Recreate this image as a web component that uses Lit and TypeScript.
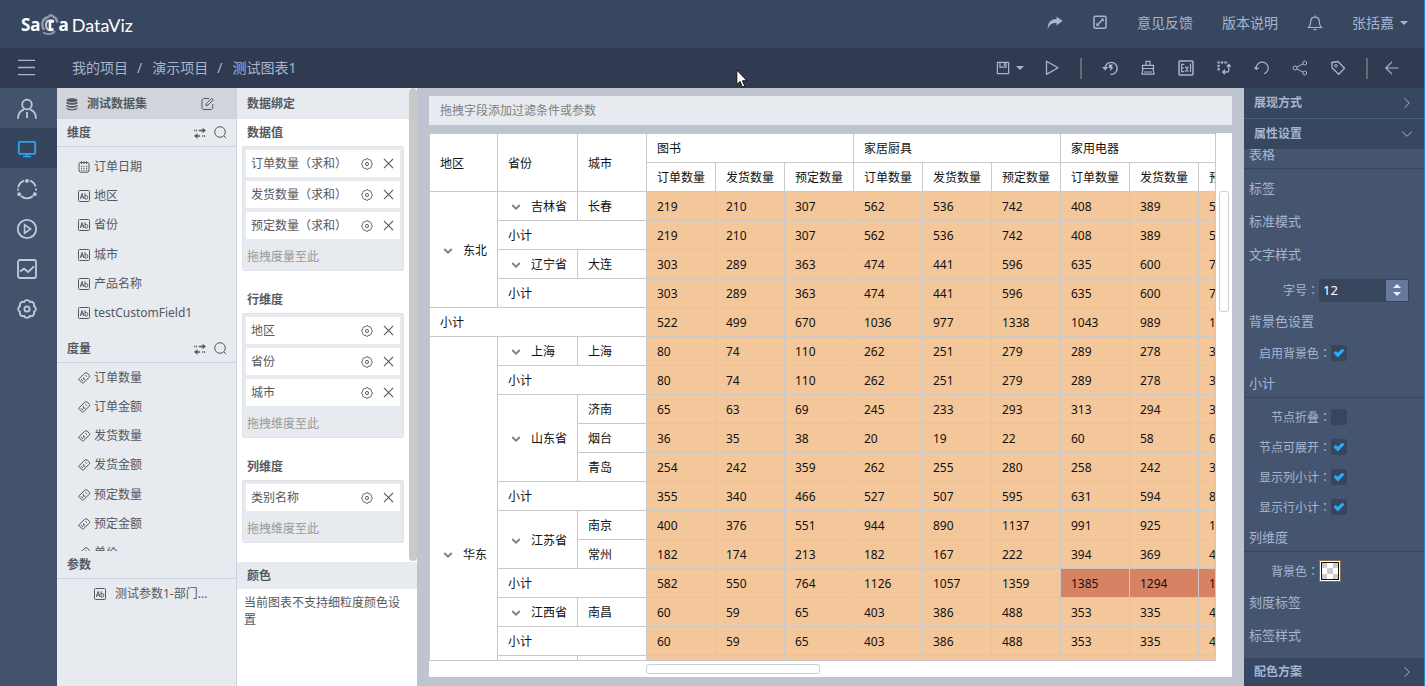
import { LitElement, html, svg, css, nothing, TemplateResult } from "lit";
import { customElement, state } from "lit/decorators.js";
import { classMap } from "lit/directives/class-map.js";

const glyphs: Record<string, TemplateResult> = {
  menu: svg`<path d="M0 1.500h18M0 9h18M0 16.500h18" stroke-width="1.400"/>`,
  user: svg`<circle cx="10" cy="5.500" r="4.800"/><path d="M1 19.800c0-5.200 2.400-8.200 6-9.200M19 19.800c0-5.200-2.400-8.200-6-9.200M10 13v6"/>`,
  monitor: svg`<rect x="1.800" y="2.800" width="16.400" height="12" rx="1"/><path d="M6 17.400h8M10 15v2" stroke-width="1.500"/>`,
  nodes: svg`<path d="M12.800 1.600a9 9 0 0 1 5.800 6M16 17a9 9 0 0 1-12 0M1.300 8.200a9 9 0 0 1 5.900-6.600M1 9.500v2M19 9.500v2"/><g fill="currentColor" stroke="none"><circle cx="10" cy="1.900" r="1.900"/><circle cx="2.200" cy="15.200" r="1.900"/><circle cx="17.800" cy="15.200" r="1.900"/></g>`,
  play: svg`<circle cx="10" cy="10" r="9.200"/><path d="M7.600 5.800v8.400l6-4.200z" stroke-width="1.600"/>`,
  trend: svg`<rect x="1" y="1" width="18" height="18" rx="2"/><path d="M3 12.500l4-2.800 4.200 3.300 5.800-5.600"/>`,
  settings: svg`<path d="M17 12.900A3.200 3.200 0 0 1 12.900 17 3.200 3.200 0 0 1 7.100 17 3.200 3.200 0 0 1 3 12.900 3.200 3.200 0 0 1 3 7.100 3.200 3.200 0 0 1 7.100 3 3.200 3.200 0 0 1 12.900 3 3.200 3.200 0 0 1 17 7.100 3.200 3.200 0 0 1 17 12.900z"/><circle cx="10" cy="10" r="2.600"/>`,
  share: svg`<path d="M9.500 1.500L15.600 6 9.500 10.500V8C5 7.800 2.800 9.300.8 14 .4 8 3.500 4.300 9.500 4z" fill="currentColor" stroke="none"/>`,
  expand: svg`<rect x="2" y="1.200" width="12" height="12" rx="1.500" stroke-width="1.500"/><path d="M5.300 10l5.500-5.500" stroke-width="1.500"/><path d="M8.600 3.500h3.200v3.200zM4.300 7.800V11h3.200z" fill="currentColor" stroke="none"/>`,
  bell: svg`<path d="M1.500 12.500h13c-1.700-1.500-2.200-3-2.200-6 0-2.800-1.500-4.400-4.300-4.400S3.700 3.700 3.700 6.500c0 3-.5 4.500-2.200 6zM6.500 14.700h3M8 .6v1.500" stroke-width="1.200"/>`,
  save: svg`<path d="M1.600 1.600h12.800v12.800H1.600z" stroke-width="1.400"/><path d="M4.500 1.600v5.500h7V1.600" stroke-width="1.400"/><path d="M9.600 2v3.400" stroke-width="1.500"/>`,
  run: svg`<path d="M2.500 1.200v13.200L14 7.800z" stroke-width="1.300" stroke-linejoin="round"/>`,
  history: svg`<path d="M3.200 8.500A6 6 0 1 1 8.500 14.300" stroke-width="1.400"/><path d="M0 7h6.200L3.200 10.500z" fill="currentColor" stroke="none"/><path d="M7 4.500h4L9.500 7h2L8 11.500 8.500 8H6.500z" fill="currentColor" stroke="none"/>`,
  brush: svg`<path d="M6 5V1.300h4V5M2.500 5.300h11v3.200h-11zM3 8.500L2 14.200h12L13 8.500M4 12h8" stroke-width="1.200"/>`,
  excel: svg`<rect x="1" y="1" width="14" height="14" rx="1" stroke-width="1.500"/><path d="M6.300 4.300H3.600v7.400h2.700M3.600 8h2.500M7.500 6.500l2.700 5.200M10.200 6.500l-2.700 5.200M12.500 3.500v8.500" stroke-width="1.200"/>`,
  exchange: svg`<path d="M1.500 2.500h10.500" stroke-width="2.200" stroke-dasharray="2.400 1"/><path d="M2.600 4.800v5.600" stroke-width="2.200" stroke-dasharray="2.300 1"/><path d="M12.800 5v5.500c0 1-.5 1.500-1.500 1.500H7M10.800 6.700l2-2.200 2 2.200M9 9.800L6.800 12 9 14.200" stroke-width="1.300"/>`,
  undo: svg`<path d="M2.300 9A6 6 0 1 1 10 13.800" stroke-width="1.200"/><path d="M.5 6.800L2.200 9.400 4.800 7.800" stroke-width="1.200"/>`,
  branch: svg`<circle cx="3" cy="8" r="2"/><circle cx="12.800" cy="3" r="1.900"/><circle cx="12.800" cy="13" r="1.900"/><path d="M4.800 7.100l6.200-3.200M4.800 8.900l6.200 3.200"/>`,
  tag: svg`<path d="M1.700 2.500l6.300-1 6.500 6.800-5.800 6L2.200 8z" stroke-width="1.300" stroke-linejoin="round"/><circle cx="6" cy="5.800" r="1.300"/>`,
  back: svg`<path d="M14.500 8H2M8 1.800L1.800 8 8 14.200" stroke-width="1.200"/>`,
  database: svg`<g fill="currentColor" stroke="none"><ellipse cx="6" cy="2.200" rx="5.500" ry="2"/><path d="M.5 3.600c2 1.800 9 1.800 11 0v1.900c-2 1.800-9 1.800-11 0zM.5 6.700c2 1.800 9 1.800 11 0v1.900c-2 1.800-9 1.800-11 0zM.5 9.800c2 1.800 9 1.800 11 0v1.200c-2 1.700-9 1.700-11 0z"/></g>`,
  edit: svg`<path d="M8 1.500H2.500L1 3v8.500L2 12.500h8.500l1.300-1.300V7M5 8.500l.4-2 5.200-5.200 1.700 1.500-5.400 5.300z"/>`,
  swap: svg`<path d="M5 3.500h5M2 9h4" stroke-width="1.600"/><path d="M0 3.500h4M8 9h4" stroke-width="1.500" stroke-dasharray="1.200 .8"/><path d="M8.500 .8L12 3.500 8.500 6.200zM3.500 6.300L0 9l3.500 2.700z" fill="currentColor" stroke="none"/>`,
  search: svg`<circle cx="6" cy="6" r="5.300"/><path d="M9.800 9.800l2.400 2.400"/>`,
  calendar: svg`<path d="M1 2.500v7.500l1 1.200h8l1-1.200V2.500l-1-.9H2zM3.500 .3V3M6 .3V3M8.500 .3V3"/><path d="M3 5.300h6.500M3 7.300h6.500M3 9.300h6.500" stroke-dasharray="1.300 1.200"/>`,
  text: svg`<rect x=".5" y=".5" width="11" height="11" rx="1"/><path d="M2.300 9l1.800-5.500L5.800 9M2.900 7h2.300M7 3.200V9M7 6c.6-.8 2.800-1 2.800 1.300S7.600 9.500 7 8.500"/>`,
  measure: svg`<path d="M.4 7.400L7.200 .8l2 .2 2.400 2.600-.1 1.400-6.600 6.300z" stroke-linejoin="round"/><path d="M3 7l1.200 1.500h.9M5.600 5.200v2h1.600M7.500 3.200l1.200 1.500"/>`,
  close: svg`<path d="M1 1l10 10M11 1L1 11" stroke-width="1.200"/>`,
  right: svg`<path d="M3.500 1.200L8.300 6l-4.800 4.800"/>`,
  down: svg`<path d="M1.200 3.500L6 8.300l4.800-4.800"/>`,
  toggle: svg`<path d="M1.200 3l3.800 3.600L8.800 3" stroke-width="1.900"/>`,
};

const icon = (name: string, size: number, box = size, weight = 1) => html`<svg
  class="icon" width=${size} height=${size} viewBox="0 0 ${box} ${box}" fill="none"
  stroke="currentColor" stroke-width=${weight} aria-hidden="true">${glyphs[name]}</svg>`;

const wide = (s: string) => html`<span class="wide">${s}</span>`;

interface Head { t: string; rows?: number; cols?: number; tree?: boolean }
interface Row { heads: Head[]; values: (number | string)[]; hot?: number }

const sub = (cols: number): Head => ({ t: "小计", cols });
const blank = ["", "", "", "", "", "", "", "", ""];
const rows: Row[] = [
  { heads: [{ t: "东北", rows: 4, tree: true }, { t: "吉林省", tree: true }, { t: "长春" }], values: [219, 210, 307, 562, 536, 742, 408, 389, 541] },
  { heads: [sub(2)], values: [219, 210, 307, 562, 536, 742, 408, 389, 541] },
  { heads: [{ t: "辽宁省", tree: true }, { t: "大连" }], values: [303, 289, 363, 474, 441, 596, 635, 600, 793] },
  { heads: [sub(2)], values: [303, 289, 363, 474, 441, 596, 635, 600, 793] },
  { heads: [sub(3)], values: [522, 499, 670, 1036, 977, 1338, 1043, 989, 1334] },
  { heads: [{ t: "华东", rows: 15, tree: true }, { t: "上海", tree: true }, { t: "上海" }], values: [80, 74, 110, 262, 251, 279, 289, 278, 372] },
  { heads: [sub(2)], values: [80, 74, 110, 262, 251, 279, 289, 278, 372] },
  { heads: [{ t: "山东省", rows: 3, tree: true }, { t: "济南" }], values: [65, 63, 69, 245, 233, 293, 313, 294, 398] },
  { heads: [{ t: "烟台" }], values: [36, 35, 38, 20, 19, 22, 60, 58, 67] },
  { heads: [{ t: "青岛" }], values: [254, 242, 359, 262, 255, 280, 258, 242, 362] },
  { heads: [sub(2)], values: [355, 340, 466, 527, 507, 595, 631, 594, 827] },
  { heads: [{ t: "江苏省", rows: 2, tree: true }, { t: "南京" }], values: [400, 376, 551, 944, 890, 1137, 991, 925, 1252] },
  { heads: [{ t: "常州" }], values: [182, 174, 213, 182, 167, 222, 394, 369, 488] },
  { heads: [sub(2)], values: [582, 550, 764, 1126, 1057, 1359, 1385, 1294, 1740], hot: 6 },
  { heads: [{ t: "江西省", tree: true }, { t: "南昌" }], values: [60, 59, 65, 403, 386, 488, 353, 335, 451] },
  { heads: [sub(2)], values: [60, 59, 65, 403, 386, 488, 353, 335, 451] },
  { heads: [{ t: "" }, { t: "" }], values: blank },
  { heads: [{ t: "", cols: 2 }], values: blank },
  { heads: [{ t: "" }, { t: "" }], values: blank },
  { heads: [{ t: "", cols: 2 }], values: blank },
];

@customElement("app-root")
export class AppRoot extends LitElement {
  static styles = css`
    :host {
      display: flex; flex-direction: column; height: 100vh; overflow: hidden; position: relative;
      box-sizing: border-box; border-right: 1px solid #2b87c8; background: #bec5d0; color: #55585e;
      font: 12px/16px "Noto Sans", "Noto Sans CJK SC", sans-serif;
    }
    *, *::before { box-sizing: border-box; }
    button, input { font: inherit; color: inherit; border: 0; padding: 0; margin: 0; background: none; }
    button { display: flex; align-items: center; justify-content: center; cursor: pointer; }
    a { color: inherit; text-decoration: none; }
    ul, ol { list-style: none; margin: 0; padding: 0; }
    h2, h3, p { margin: 0; font-size: inherit; }
    .icon { display: block; flex: none; overflow: visible; }
    .wide { font-family: "Noto Sans CJK TC", sans-serif; }
    .caret { width: 8px; height: 4px; background: currentColor; clip-path: polygon(0 0, 100% 0, 50% 100%); }

    .top, .bar { display: flex; align-items: center; justify-content: space-between; flex: none; color: #a6b5d0; font-size: 14px; line-height: 20px; }
    .top { height: 48px; padding: 0 16px 2px 21px; background: #384760; }
    .logo { display: flex; align-items: center; color: #fff; font: 17px/24px "Noto Sans", sans-serif; padding-top: 3px; }
    .logo .viz { font: 18px/24px Lato, sans-serif; padding-left: 3px; }
    .links { display: flex; align-items: center; gap: 29px; }
    .account { gap: 6px; }
    .bar { height: 40px; padding: 0 24px 0 18px; background: #303b51; }
    .crumbs { display: flex; align-items: center; }
    .crumbs ol { display: flex; padding-left: 36px; }
    .crumbs li + li::before { content: "/"; padding: 0 10px 0 9px; }
    .tools { display: flex; align-items: center; gap: 20px; }
    .group { display: flex; gap: 22px; }
    .leave { display: flex; align-items: center; gap: 16px; }
    .saver { gap: 6px; }
    .rule { width: 2px; height: 21px; background: #676c74; }

    .body { display: flex; flex: 1; min-height: 0; }
    .rail { width: 57px; flex: none; background: #43536b; color: #bfcbdc; }
    .rail button { width: 100%; height: 40px; padding: 2px 3px 0 0; }
    .rail .on { background: #36455e; color: #2fa3f2; }

    .fields-panel { width: 180px; flex: none; background: #e7eaef; border-right: 1px solid #cbd3de; }
    .dataset { display: flex; align-items: center; height: 31px; padding: 0 22px 0 9px; background: #d1d4dc; }
    .dataset h2 { flex: 1; padding-left: 9px; }
    .cat { display: flex; align-items: center; gap: 8px; height: 28px; padding: 0 9px 0 10px; border-bottom: 1px solid #cbd3de; }
    .cat h3 { flex: 1; }
    .list { height: 188px; overflow: hidden; }
    .list ul { display: grid; grid-auto-rows: 1fr; height: 205px; }
    .list .dims { height: 188px; padding: 5px 0 7px; }
    .list li, .param { display: flex; align-items: center; gap: 4px; padding-left: 21px; }
    .param { height: 30px; padding-left: 37px; gap: 9px; }

    .bind { width: 180px; flex: none; background: #fff; display: flex; flex-direction: column; }
    .bind-scroll { display: flex; height: 474px; }
    .bind-main { flex: 1; min-width: 0; }
    .thumb { width: 8px; height: 473px; border-radius: 4px; background: #c9c9c9; }
    .bind-head { height: 31px; padding: 8px 10px; background: #e7eaef; }
    .bind h3 { height: 27px; padding: 6px 10px 0; }
    .shelf { display: grid; gap: 4px; margin: 0 5px 15px; padding: 3px 3px 0; background: #e7eaef; border: 1px solid #dfe2e7; border-radius: 2px; }
    .chip { display: flex; align-items: center; height: 27px; padding: 0 6px 0 5px; background: #fff; }
    .chip span.name { flex: 1; white-space: nowrap; }
    .chip button + button { padding-left: 10px; }
    .hint { height: 27px; padding: 6px 1px 0; color: #999; }
    .colour-head { height: 27px; padding: 6px 10px 5px; background: #e7eaef; }
    .note { padding: 5px 7px; line-height: 17px; }

    .main { flex: 1; min-width: 0; display: flex; flex-direction: column; gap: 8px; padding: 8px 12px 9px; }
    .filter { height: 29px; flex: none; padding: 7px 11px; background: #e7eaef; color: #7d7f83; }
    .sheet { flex: 1; min-height: 0; display: grid; grid-template: minmax(0, 1fr) 16px / minmax(0, 1fr) 16px; background: #fff; }
    .view { overflow: hidden; border: 1px solid #c9c9c9; }
    .vtrack { padding: 58px 3px 0; }
    .vthumb { height: 121px; border: 1px solid #ccd0d6; border-radius: 3px; }
    .htrack { padding: 3px 0 0 217px; }
    .hthumb { width: 174px; height: 10px; border: 1px solid #ccd0d6; border-radius: 3px; }
    table { width: 838px; table-layout: fixed; border-spacing: 0; color: #111; }
    th, td { height: 29px; padding: 2px 0 0 10px; border: solid #c9c9c9; border-width: 0 1px 1px 0; text-align: left; font-weight: 400; white-space: nowrap; }
    .c1 { width: 68px; } .c2 { width: 80px; } .c3 { width: 69px; }
    .tree { padding-left: 13px; }
    .tree div { display: flex; align-items: center; gap: 10px; }
    .tree button { color: #808080; }
    td { background: #f4c79a; }
    td.hot { background: #d88264; }

    .props { width: 180px; flex: none; display: flex; flex-direction: column; background: #455570; color: #a6b5d0; }
    .fold { display: flex; justify-content: space-between; height: 30px; flex: none; padding: 0 11px 0 10px; background: #384760; font-weight: 700; text-align: left; }
    .fold.next { height: 31px; border-top: 1px solid #4a5b78; }
    .fold.last { height: 28px; }
    .prop-body { flex: 1; min-height: 0; overflow: hidden; display: flex; flex-direction: column; justify-content: flex-end; padding-bottom: 6px; }
    .prop-body h3 { flex: none; height: 33px; padding: 7px 5px 0; font-size: 13px; line-height: 18px; font-weight: 400; }
    .prop-body .sect { height: 30px; padding-top: 6px; border-bottom: 1px solid #364560; }
    .heads { padding-top: 3px; }
    .rows { padding-top: 4px; }
    .rows.tight { padding-top: 0; }
    .row { display: flex; align-items: center; height: 30px; }
    .row label { width: 75px; text-align: right; }
    .row .long { width: 87px; }
    .num { display: flex; width: 90px; height: 23px; border: 1px solid #37455d; background: #37455d; }
    .num input { flex: 1; min-width: 0; padding-left: 3px; color: #fff; font-size: 13px; outline: 0; appearance: textfield; }
    .num input::-webkit-inner-spin-button { appearance: none; }
    .spin { width: 22px; display: flex; flex-direction: column; justify-content: center; gap: 4px; background: #66789b; color: #dff3fb; }
    .spin .up { transform: rotate(180deg); }
    input[type="checkbox"] { appearance: none; width: 16px; height: 16px; border-radius: 2px; background: #37455d; display: grid; place-items: center; }
    input[type="checkbox"]:checked::before { content: ""; width: 11px; height: 9px; background: #2fa9f5; clip-path: polygon(0 50%, 20% 28%, 38% 48%, 80% 0, 100% 22%, 40% 100%); }
    .swatch { width: 22px; height: 22px; border: 1px solid #8f6d4b; background: #fff; padding: 1px; }
    .swatch span { width: 18px; height: 18px; border: 1px solid #111; background: repeating-conic-gradient(#fff 0 25%, #ccc 0 50%) 5px 5px / 12px 12px; }
    .pointer { position: absolute; left: 736px; top: 69px; }
  `;

  @state() private size = 12;

  private cat(name: string, tools = true) {
    return html`<div class="cat"><h3>${name}</h3>${tools
      ? html`<button aria-label="切换">${icon("swap", 12)}</button><button aria-label="搜索">${icon("search", 13)}</button>`
      : nothing}</div>`;
  }

  private shelf(title: string, items: string[], sum: boolean) {
    return html`<h3>${title}</h3>
      <div class="shelf">
        ${items.map((n) => html`<div class="chip"><span class="name">${n}${sum ? html`${wide("（")}求和${wide("）")}` : nothing}</span>
          <button aria-label="设置">${icon("settings", 12, 20, 1.6)}</button><button aria-label="移除">${icon("close", 11, 12)}</button></div>`)}
        <p class="hint">拖拽${sum ? "度量" : "维度"}至此</p>
      </div>`;
  }

  private check(id: string, text: string, on: boolean) {
    return html`<div class="row"><label class="long" for=${id}>${text}${wide("：")}</label><input id=${id} type="checkbox" ?checked=${on}></div>`;
  }

  private head(h: Head) {
    return html`<th scope="row" class=${classMap({ tree: !!h.tree })} rowspan=${h.rows ?? 1} colspan=${h.cols ?? 1}>${h.tree
      ? html`<div><button aria-label="折叠">${icon("toggle", 10)}</button>${h.t}</div>` : h.t}</th>`;
  }

  render() {
    return html`
      <header class="top">
        <div class="logo"><b>Sa</b>
          <svg width="18" height="22" viewBox="0 0 18 22" fill="none">
            <path d="M3 16C0 11 1 5 6 3.500L10 1l5 3.500 1.500 4" stroke="#8e9aac" stroke-width="2.500"/>
            <path d="M2 18.500c4 2.500 10 2 12-1.500" stroke="#8e9aac" stroke-width="2"/>
            <path d="M13 7c-5-2-8 0-8 4s2 6 7 5" stroke="#c3cad4" stroke-width="2"/>
            <path d="M13 7.500H9v8h3.500" stroke="#fff" stroke-width="2.600"/>
          </svg><b>a</b><span class="viz">DataViz</span></div>
        <nav class="links">
          <button aria-label="分享">${icon("share", 16)}</button>
          <button aria-label="全屏">${icon("expand", 16)}</button>
          <a href="#">意见反馈</a><a href="#">版本说明</a>
          <button aria-label="通知">${icon("bell", 16)}</button>
          <button class="account">张括嘉<span class="caret"></span></button>
        </nav>
      </header>
      <div class="bar">
        <nav class="crumbs">
          <button aria-label="菜单">${icon("menu", 18, 19)}</button>
          <ol><li><a href="#">我的项目</a></li><li><a href="#">演示项目</a></li><li><a href="#">测试图表1</a></li></ol>
        </nav>
        <div class="tools">
          <button class="saver" aria-label="保存">${icon("save", 14, 16)}<span class="caret"></span></button>
          <button aria-label="运行">${icon("run", 16)}</button>
          <span class="rule"></span>
          <div class="group">${["history", "brush", "excel", "exchange", "undo", "branch", "tag"].map((n) => html`<button aria-label=${n}>${icon(n, 16)}</button>`)}</div>
          <div class="leave"><span class="rule"></span><button aria-label="返回">${icon("back", 16)}</button></div>
        </div>
      </div>
      <div class="body">
        <nav class="rail">${["user", "monitor", "nodes", "play", "trend", "settings"].map((n) => html`<button class=${classMap({ on: n === "monitor" })} aria-label=${n}>${icon(n, 20, 20, 1.8)}</button>`)}</nav>

        <aside class="fields-panel">
          <div class="dataset">${icon("database", 12)}<h2>测试数据集</h2><button aria-label="编辑">${icon("edit", 13)}</button></div>
          ${this.cat("维度")}
          <div class="list"><ul class="dims">
            ${["订单日期", "地区", "省份", "城市", "产品名称", "testCustomField1"].map((n, i) => html`<li>${icon(i ? "text" : "calendar", 12)}${n}</li>`)}
          </ul></div>
          ${this.cat("度量")}
          <div class="list"><ul>
            ${["订单数量", "订单金额", "发货数量", "发货金额", "预定数量", "预定金额", "单价"].map((n) => html`<li>${icon("measure", 12)}${n}</li>`)}
          </ul></div>
          ${this.cat("参数", false)}
          <div class="param">${icon("text", 12)}测试参数1-部门...</div>
        </aside>

        <aside class="bind">
          <div class="bind-scroll">
            <div class="bind-main">
              <h2 class="bind-head">数据绑定</h2>
              ${this.shelf("数据值", ["订单数量", "发货数量", "预定数量"], true)}
              ${this.shelf("行维度", ["地区", "省份", "城市"], false)}
              ${this.shelf("列维度", ["类别名称"], false)}
            </div>
            <div class="thumb"></div>
          </div>
          <h2 class="colour-head">颜色</h2>
          <p class="note">当前图表不支持细粒度颜色设置</p>
        </aside>

        <main class="main">
          <div class="filter">拖拽字段添加过滤条件或参数</div>
          <div class="sheet">
            <div class="view"><table>
              <colgroup><col class="c1"><col class="c2"><col class="c3" span="10"></colgroup>
              <thead>
                <tr><th rowspan="2">地区</th><th rowspan="2">省份</th><th rowspan="2">城市</th>${["图书", "家居厨具", "家用电器"].map((n) => html`<th colspan="3">${n}</th>`)}</tr>
                <tr>${[0, 1, 2].map(() => ["订单数量", "发货数量", "预定数量"].map((n) => html`<th>${n}</th>`))}</tr>
              </thead>
              <tbody>${rows.map((r) => html`<tr>${r.heads.map((h) => this.head(h))}${r.values.map((v, i) => html`<td class=${classMap({ hot: r.hot !== undefined && i >= r.hot })}>${v}</td>`)}</tr>`)}</tbody>
            </table></div>
            <div class="vtrack"><div class="vthumb"></div></div>
            <div class="htrack"><div class="hthumb"></div></div>
          </div>
        </main>

        <aside class="props">
          <button class="fold">展现方式${icon("right", 12)}</button>
          <button class="fold next">属性设置${icon("down", 12)}</button>
          <div class="prop-body">
            <h3 class="sect">表格</h3>
            <div class="heads"><h3>标签</h3><h3>标准模式</h3><h3>文字样式</h3></div>
            <div class="rows"><div class="row"><label for="size">字号${wide("：")}</label>
              <div class="num"><input id="size" type="number" .value=${String(this.size)}>
                <div class="spin"><button aria-label="增大" @click=${() => this.size++}><span class="caret up"></span></button><button aria-label="减小" @click=${() => this.size--}><span class="caret"></span></button></div>
              </div></div></div>
            <h3>背景色设置</h3>
            <div class="rows tight">${this.check("bg", "启用背景色", true)}</div>
            <h3 class="sect">小计</h3>
            <div class="rows">
              ${this.check("fold", "节点折叠", false)}${this.check("open", "节点可展开", true)}
              ${this.check("cols", "显示列小计", true)}${this.check("rows", "显示行小计", true)}
            </div>
            <h3 class="sect">列维度</h3>
            <div class="rows"><div class="row"><label for="swatch">背景色${wide("：")}</label><button id="swatch" class="swatch" aria-label="背景色"><span></span></button></div></div>
            <h3>刻度标签</h3><h3>标签样式</h3>
          </div>
          <button class="fold last">配色方案${icon("right", 12)}</button>
        </aside>
      </div>
      <svg class="pointer" width="13" height="20" viewBox="0 0 13 20"><path d="M.8 1v14.500l3.300-3 2.300 5.600 2.400-1-2.400-5.300H11z" fill="#fff" stroke="#111"/></svg>
    `;
  }
}
